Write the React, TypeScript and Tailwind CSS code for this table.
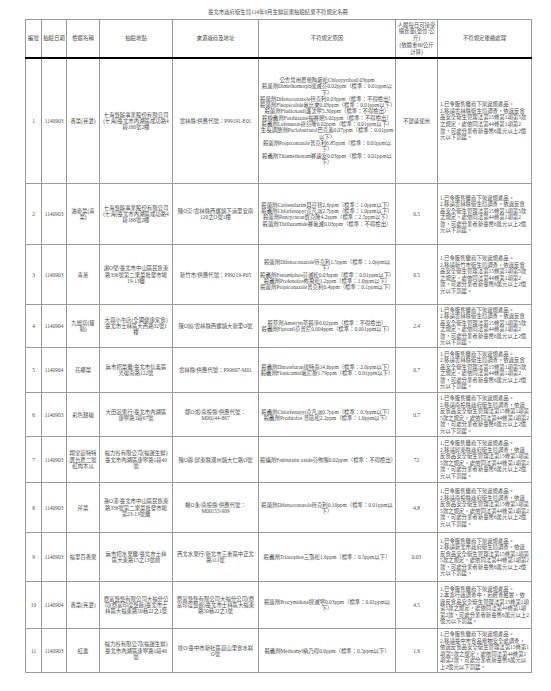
type Row = {
  no: string;
  date: string;
  name: string;
  place: string;
  source: string;
  reasons: string[];
  adi: string;
  bureau: string;
  h: string;
};

const handling = (bureau: string) =>
  `2.移請${bureau}調查，依違反食品安全衛生管理法第15條第1項第5款之規定，處依同法第44條第1項第2款，可處分業者新臺幣6萬元以上2億元以下罰鍰。`;

const rows: Row[] = [
  {
    no: "1",
    date: "1140903",
    name: "香菜(芫荽)",
    place: "七海藝殷事業股份有限公司(七海)臺北市內湖區成功路4段166號2樓",
    source: "雲林縣/供應代號：P99191-E01",
    reasons: [
      "公告禁用農藥陶斯松Chlorpyrifos0.03ppm",
      "殺菌劑Dimethomorph達滅芬0.02ppm（標準：0.01ppm以下）",
      "殺菌劑Difenoconazole待克利0.03ppm（標準：不得檢出）",
      "殺菌劑Fluopicolide氟比來0.03ppm（標準：0.01ppm以下）",
      "殺菌劑Fludioxonil護汰寧5.30ppm（標準：不得檢出）",
      "殺線蟲劑Fosthiazate福賽絕3.02ppm（標準：不得檢出）",
      "殺蟲劑Lufenuron祿芬隆0.02ppm（標準：0.01ppm以下）",
      "生長調節劑Paclobutrazol巴克素0.07ppm（標準：0.01ppm以下）",
      "殺菌劑Propiconazole普克利6.85ppm（標準：0.01ppm以下）",
      "殺蟲劑Thiamethoxam賽速安0.03ppm（標準：0.01ppm以下）",
    ],
    adi: "不建議使用",
    bureau: "雲林縣衛生局",
    h: "h-[126px]",
  },
  {
    no: "2",
    date: "1140903",
    name: "油麥菜(青菜)",
    place: "七海藝殷事業股份有限公司(七海)臺北市內湖區成功路4段166號2樓",
    source: "陳O崇/雲林縣西螺鎮下湳里安南120之O號1樓",
    reasons: [
      "殺菌劑Carbendazim貝芬替2.6ppm（標準：1.0ppm以下）",
      "殺蟲劑Chlorfenapyr克凡派2.7ppm（標準：1.0ppm以下）",
      "殺菌劑Pencycuron賓克隆4.2ppm（標準：2.5ppm以下）",
      "殺菌劑Thifluzamide賽氟滅0.03ppm（標準：不得檢出）",
    ],
    adi: "0.5",
    bureau: "雲林縣衛生局",
    h: "h-[61px]",
  },
  {
    no: "3",
    date: "1140903",
    name: "青蔥",
    place: "謝O瑩/臺北市中山區民族東路336號第二果菜批發市場19-13攤",
    source: "新竹市/供應代號：P99219-P05",
    reasons: [
      "殺菌劑Difenoconazole待克利1.5ppm（標準：1.0ppm以下）",
      "殺蟲劑Fenamiphos芬滅松0.03ppm（標準：0.01ppm以下）",
      "殺蟲劑Profenofos佈飛松1.2ppm（標準：1.0ppm以下）",
      "殺菌劑Propiconazole普克利0.4ppm（標準：0.1ppm以下）",
    ],
    adi: "0.5",
    bureau: "新竹市衛生局",
    h: "h-[60px]",
  },
  {
    no: "4",
    date: "1140904",
    name: "九層塔(羅勒)",
    place: "大買小屯店(全國健康家食)臺北市士林區大西路32號1樓",
    source: "陳O旭/雲林縣西螺鎮大新里O號",
    reasons: [
      "殺草劑Ametryn草殺淨0.02ppm（標準：不得檢出）",
      "殺蟲劑Fipronil芬普尼0.004ppm（標準：0.001ppm以下）",
    ],
    adi: "2.4",
    bureau: "雲林縣衛生局",
    h: "h-[43px]",
  },
  {
    no: "5",
    date: "1140904",
    name: "花椰菜",
    place: "無市招菜攤/臺北市信義區光復南路122號",
    source: "雲林縣/供應代號：P99607-M01",
    reasons: [
      "殺蟲劑Dinotefuran達特南14.6ppm（標準：2.0ppm以下）",
      "殺蟲劑Flonicamid氟尼胺1.79ppm（標準：0.01ppm以下）",
    ],
    adi: "0.7",
    bureau: "雲林縣衛生局",
    h: "h-[45px]",
  },
  {
    no: "6",
    date: "1140903",
    name: "彩色甜椒",
    place: "大田蔬果行/臺北市內湖區康寧路1段67號",
    source: "鄒O鴻/南投縣/供應代號：M00144-867",
    reasons: [
      "殺蟲劑Chlorfenapyr克凡派0.7ppm（標準：0.3ppm以下）",
      "殺蟲劑Prothiofos 普硫松2.2ppm（標準：1.0ppm以下）",
    ],
    adi: "0.7",
    bureau: "南投縣政府衛生局",
    h: "h-[44px]",
  },
  {
    no: "7",
    date: "1140903",
    name: "翔堂蔬特特\n選台農二號\n紅肉木瓜",
    place: "福力谷有限公司(福運生鮮)臺北市內湖區康寧路1段40號",
    source: "陳O蓉/屏東縣潮州鎮大仁路O號",
    reasons: ["殺蟎劑Fenbutatin oxide芬佈賜0.02ppm（標準：不得檢出）"],
    adi: "72",
    bureau: "屏東縣政府衛生局",
    h: "h-[46px]",
  },
  {
    no: "8",
    date: "1140903",
    name: "芹菜",
    place: "孫O澤/臺北市中山區民族東路336號第二果菜批發市場第23-13號攤",
    source: "楊O永/南投縣/供應代號：M00153-909",
    reasons: ["殺菌劑Difenoconazole待克利0.10ppm（標準：0.01ppm以下）"],
    adi: "4.8",
    bureau: "南投縣政府衛生局",
    h: "h-[50px]",
  },
  {
    no: "9",
    date: "1140903",
    name: "福里百香果",
    place: "無市招水果攤/臺北市士林區大東路15之13號前",
    source: "西北水果行/新北市三重區中正北路111號",
    reasons: ["殺蟲劑Triazophos三落松1.6ppm（標準：0.5ppm以下）"],
    adi: "0.03",
    bureau: "新北市政府衛生局",
    h: "h-[49px]",
  },
  {
    no: "10",
    date: "1140904",
    name: "香菜(芫荽)",
    place: "鼎富藝藝有限公司大福分公司(鼎富印度藝廊)臺北市士林區大福東路50巷22之1號",
    source: "鼎富藝藝有限公司大福分公司(鼎富印度藝廊)臺北市士林區大福東路50巷22之1號",
    reasons: ["殺菌劑Procymidone撲滅寧0.03ppm（標準：0.01ppm以下）"],
    adi: "4.5",
    bureau: "",
    h: "h-[47px]",
  },
  {
    no: "11",
    date: "1140903",
    name: "紅棗",
    place: "福力谷有限公司(福運生鮮)臺北市內湖區康寧路1段40號",
    source: "徐O/臺中市新社區崑山里食水嵙O號",
    reasons: ["殺蟲劑Methomyl納乃得0.6ppm（標準：0.5ppm以下）"],
    adi: "1.6",
    bureau: "臺中市食品藥物安全處",
    h: "h-[44px]",
  },
];

const cell = "border border-[#9a9a9a] px-[1px] align-middle text-center";

export default function App() {
  return (
    <div className="min-h-screen bg-white pt-[9px] font-['Liberation_Serif','Noto_Sans_CJK_TC',serif] text-[5.4px] leading-[6.3px] text-[#4a4a4a]">
      <div className="ml-[25px] w-[506px]">
        <div className="mb-[4px] text-center">臺北市政府衛生局114年9月生鮮蔬果抽驗結果不符規定名冊</div>
        <table className="w-[506px] table-fixed border-collapse border border-[#8a8a8a]">
          <colgroup>
            <col className="w-[16px]" />
            <col className="w-[25px]" />
            <col className="w-[33px]" />
            <col className="w-[73px]" />
            <col className="w-[86px]" />
            <col className="w-[137px]" />
            <col className="w-[42px]" />
            <col className="w-[94px]" />
          </colgroup>
          <thead>
            <tr className="h-[38px]">
              <th className={`${cell} border-b-2 border-b-black font-normal`}>編號</th>
              <th className={`${cell} border-b-2 border-b-black font-normal`}>抽驗日期</th>
              <th className={`${cell} border-b-2 border-b-black font-normal`}>檢體名稱</th>
              <th className={`${cell} border-b-2 border-b-black font-normal`}>抽驗地點</th>
              <th className={`${cell} border-b-2 border-b-black font-normal`}>來源廠商及地址</th>
              <th className={`${cell} border-b-2 border-b-black font-normal`}>不符規定原因</th>
              <th className={`${cell} border-b-2 border-b-black font-normal leading-[6.8px]`}>
                人體每日可接受攝食量(單位:公斤)
                <br />
                (依體重60公斤計算)
              </th>
              <th className={`${cell} border-b-2 border-b-black font-normal`}>不符規定後續處理</th>
            </tr>
          </thead>
          <tbody>
            {rows.map((r) => (
              <tr key={r.no} className={r.h}>
                <td className={cell}>{r.no}</td>
                <td className={cell}>{r.date}</td>
                <td className={`${cell} whitespace-pre-line`}>{r.name}</td>
                <td className={`${cell} px-[3px]`}>{r.place}</td>
                <td className={`${cell} px-[3px]`}>{r.source}</td>
                <td className={cell}>
                  {r.reasons.map((t) => (
                    <div key={t}>{t}</div>
                  ))}
                </td>
                <td className={cell}>{r.adi}</td>
                <td className={`${cell} pl-[2px] pr-[2px] text-left leading-[6.6px]`}>
                  <div>1.已令販售攤商下架違規產品。</div>
                  <div>
                    {r.bureau
                      ? handling(r.bureau)
                      : "2.本案行政調查中，若經查屬實，依違反食品安全衛生管理法第15條第1項第5款之規定，處依同法第44條第1項第2款，可處分業者新臺幣6萬元以上2億元以下罰鍰。"}
                  </div>
                </td>
              </tr>
            ))}
          </tbody>
        </table>
      </div>
    </div>
  );
}
